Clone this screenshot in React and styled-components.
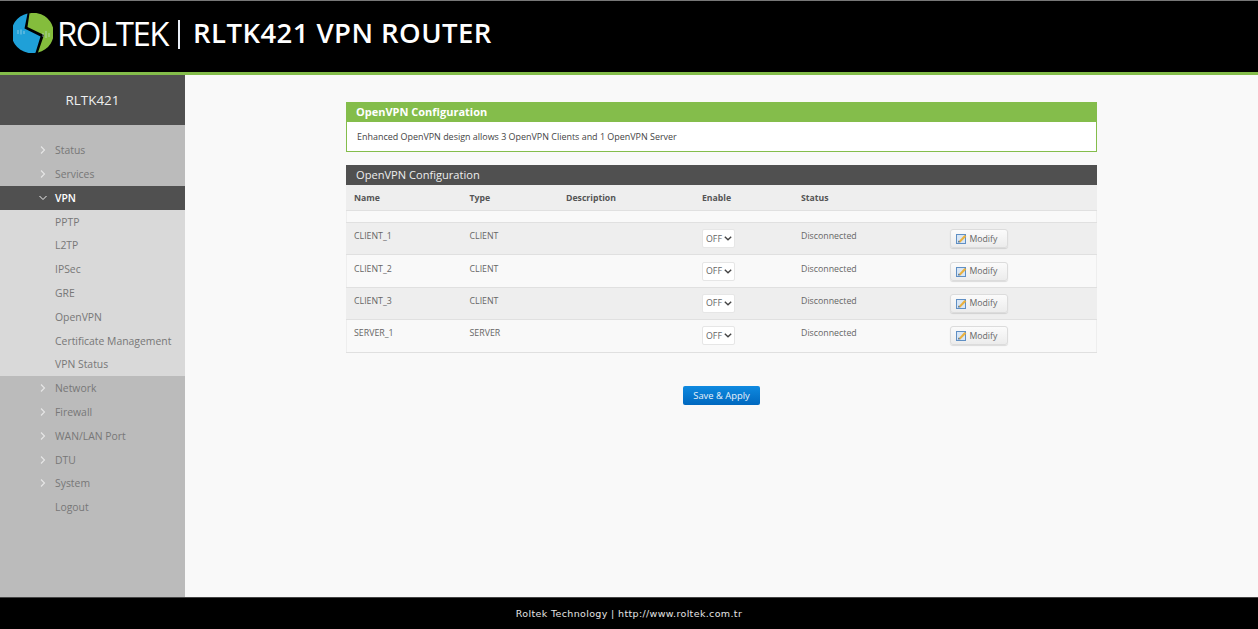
import React from 'react';
import styled, { createGlobalStyle } from 'styled-components';

const Global = createGlobalStyle`
    html, body { margin: 0; padding: 0; height: 100%; }
    body { font-family: "Open Sans", "Noto Sans", sans-serif; background: #000; }
    #root { height: 100%; }
`;

const Page = styled.div`
    height: 629px;
    display: flex;
    flex-direction: column;
    overflow: hidden;
`;

const Header = styled.header`
    height: 64px;
    flex: none;
    background: #000;
    border-top: 1px solid #777;
    border-bottom: 3px solid #84bd4b;
    display: flex;
    align-items: center;
    padding: 0 0 7px 13px;
    color: #fff;
`;

const Logo = styled.svg`
    width: 40px;
    height: 40px;
    flex: none;
`;

const Brand = styled.span`
    font-family: "Open Sans", sans-serif;
    font-size: 33px;
    font-weight: 400;
    letter-spacing: -1.5px;
    margin-left: 4px;
    width: 111px;
    white-space: nowrap;
`;

const Bar = styled.span`
    width: 2px;
    height: 29px;
    background: #e8eef6;
    margin: 3px 13px 0 10px;
    flex: none;
`;

const Title = styled.h1`
    margin: -2px 0 0;
    font-size: 27.5px;
    font-weight: 600;
    letter-spacing: 0.45px;
`;

const Body = styled.div`
    flex: 1;
    display: flex;
    min-height: 0;
`;

const Sidebar = styled.nav`
    width: 185px;
    flex: none;
    background: #bbbbbb;
`;

const SideTitle = styled.div`
    height: 50px;
    background: #505050;
    color: #eee;
    font-size: 13.4px;
    font-weight: 400;
    text-align: center;
    line-height: 50px;
    margin-bottom: 13.3px;
`;

const MenuItem = styled.div`
    height: 23.8px;
    display: flex;
    align-items: center;
    padding-left: 39px;
    font-size: 10.4px;
    color: ${p => (p.$active ? '#fff' : '#777')};
    background: ${p => (p.$active ? '#505050' : 'transparent')};
    font-weight: ${p => (p.$active ? 600 : 400)};
`;

const Chevron = styled.svg`
    width: 8px;
    height: 10px;
    flex: none;
    margin-right: 8px;
`;

const SubMenu = styled.div`
    background: #d9d9d9;
`;

const SubItem = styled.div`
    height: 23.8px;
    display: flex;
    align-items: center;
    padding-left: 55px;
    font-size: 10.4px;
    color: #777;
    white-space: nowrap;
`;

const Main = styled.main`
    flex: 1;
    background: #f9f9f9;
    padding-top: 27px;
`;

const Container = styled.div`
    width: 751px;
    margin: 0 auto;
`;

const InfoBox = styled.section`
    border: 1px solid #84bd4b;
    border-top: none;
    background: #fff;
    margin-bottom: 13px;
`;

const InfoHead = styled.div`
    height: 20px;
    margin: 0 -1px;
    padding-left: 10px;
    background: #84bd4b;
    color: #fff;
    font-size: 11px;
    font-weight: 700;
    line-height: 20px;
`;

const InfoText = styled.div`
    height: 29px;
    padding-left: 10px;
    font-size: 8.95px;
    line-height: 29px;
    color: #444;
`;

const TableHead = styled.div`
    height: 20px;
    padding-left: 10px;
    background: #505050;
    color: #eee;
    font-size: 11.1px;
    line-height: 20px;
`;

const Table = styled.table`
    width: 751px;
    table-layout: fixed;
    border-collapse: collapse;
    border-left: 1px solid #eee;
    border-right: 1px solid #eee;
`;

const Th = styled.th`
    height: 24px;
    padding: 1px 0 0 7px;
    background: #eeeeee;
    border-bottom: 1px solid #e0e0e0;
    color: #555;
    font-size: 8.7px;
    font-weight: 700;
    text-align: left;
    line-height: 1;
`;

const Spacer = styled.tr`
    height: 12px;
    background: #f9f9f9;
`;

const Row = styled.tr`
    height: 32.4px;
    background: ${p => (p.$alt ? '#f9f9f9' : '#eeeeee')};
    border-top: 1px solid #e0e0e0;
    border-bottom: 1px solid #e0e0e0;
`;

const Td = styled.td`
    padding: 0 0 5px 7px;
    color: #666;
    font-size: 8.8px;
`;

const ControlTd = styled.td`
    padding: 0 0 0 7px;
`;

const Select = styled.select`
    display: block;
    width: 33px;
    height: 19px;
    padding: 0 0 0 3px;
    appearance: none;
    background: #fff url("data:image/svg+xml,%3Csvg xmlns='http://www.w3.org/2000/svg' width='8' height='5'%3E%3Cpath d='M0.8 0.8 L4 3.8 L7.2 0.8' fill='none' stroke='%23444' stroke-width='1.400'/%3E%3C/svg%3E") no-repeat right 2px center;
    border: 1px solid #e6e6e6;
    border-radius: 2px;
    color: #666;
    font-family: "Open Sans", sans-serif;
    font-size: 8.8px;
`;

const ModifyBtn = styled.button`
    display: flex;
    align-items: center;
    width: 58px;
    height: 19px;
    padding: 0 0 0 5px;
    border: 1px solid #dcdcdc;
    border-radius: 3px;
    background: linear-gradient(#fbfbfb, #ececec);
    box-shadow: 0 1px 1px rgba(0, 0, 0, 0.12);
    color: #666;
    font-family: "Open Sans", sans-serif;
    font-size: 8.7px;
`;

const PenIcon = styled.svg`
    width: 11px;
    height: 11px;
    margin-right: 3px;
    flex: none;
`;

const Actions = styled.div`
    display: flex;
    justify-content: center;
    margin-top: 33px;
`;

const SaveBtn = styled.button`
    width: 77px;
    height: 19px;
    padding: 0;
    border: none;
    border-radius: 2px;
    background: linear-gradient(#0f8ae0, #0068bf);
    color: #e8f2fb;
    font-family: "Open Sans", sans-serif;
    font-size: 9.4px;
    font-weight: 500;
`;

const Footer = styled.footer`
    height: 31px;
    flex: none;
    background: #000;
    border-top: 1px solid #444;
    color: #e4e4e4;
    font-family: "DejaVu Sans", sans-serif;
    font-size: 9.5px;
    letter-spacing: 0.35px;
    line-height: 31px;
    text-align: center;
`;

const top = ['Status', 'Services'];
const sub = ['PPTP', 'L2TP', 'IPSec', 'GRE', 'OpenVPN', 'Certificate Management', 'VPN Status'];
const bottom = ['Network', 'Firewall', 'WAN/LAN Port', 'DTU', 'System'];
const rows = [
    ['CLIENT_1', 'CLIENT'],
    ['CLIENT_2', 'CLIENT'],
    ['CLIENT_3', 'CLIENT'],
    ['SERVER_1', 'SERVER'],
];

function Arrow({ open }) {
    return (
        <Chevron viewBox="0 0 8 10">
            {open
                ? <path d="M0.5 3 L4 6.5 L7.5 3" fill="none" stroke="#eee" strokeWidth="1" />
                : <path d="M2 1.5 L5.5 5 L2 8.5" fill="none" stroke="#e6e6e6" strokeWidth="1.1" />}
        </Chevron>
    );
}

function Modify() {
    return (
        <ModifyBtn type="button">
            <PenIcon viewBox="0 0 11 11">
                <rect x="0.5" y="1.5" width="9" height="9" fill="#d8e6f5" stroke="#5f8fc4" />
                <path d="M2.500 8.500 L8.500 2 L10.300 3.500 L4.300 9.500 Z" fill="#e9b13f" />
                <path d="M1.800 9.600 L2.500 7.600 L4.300 9.300 Z" fill="#4a6f9c" />
            </PenIcon>
            Modify
        </ModifyBtn>
    );
}

export default function App() {
    return (
        <Page>
            <Global />
            <Header>
                <Logo viewBox="0 0 40 40">
                    <path d="M14.500 0.500 A20 20 0 0 0 22.500 39.800 L27.500 23.500 L11.500 15.500 Z" fill="#1fa0d8" />
                    <path d="M16.500 0.300 A20 20 0 0 1 25 39.400 L31 22 L14.500 14 Z" fill="#84bd3c" />
                    <path d="M5 17 v4 M8 16.500 v5 M11 18 v3 M30 20 v4 M33 18 v7 M36 20 v4" stroke="#cfe8f2" strokeWidth="0.6" />
                </Logo>
                <Brand>ROLTEK</Brand>
                <Bar />
                <Title>RLTK421 VPN ROUTER</Title>
            </Header>
            <Body>
                <Sidebar>
                    <SideTitle>RLTK421</SideTitle>
                    {top.map(t => <MenuItem key={t}><Arrow />{t}</MenuItem>)}
                    <MenuItem $active><Arrow open />VPN</MenuItem>
                    <SubMenu>
                        {sub.map(t => <SubItem key={t}>{t}</SubItem>)}
                    </SubMenu>
                    {bottom.map(t => <MenuItem key={t}><Arrow />{t}</MenuItem>)}
                    <SubItem>Logout</SubItem>
                </Sidebar>
                <Main>
                    <Container>
                        <InfoBox>
                            <InfoHead>OpenVPN Configuration</InfoHead>
                            <InfoText>Enhanced OpenVPN design allows 3 OpenVPN Clients and 1 OpenVPN Server</InfoText>
                        </InfoBox>
                        <TableHead>OpenVPN Configuration</TableHead>
                        <Table>
                            <colgroup>
                                <col style={{ width: 116 }} />
                                <col style={{ width: 96.5 }} />
                                <col style={{ width: 136 }} />
                                <col style={{ width: 99 }} />
                                <col style={{ width: 148.5 }} />
                                <col />
                            </colgroup>
                            <thead>
                                <tr>
                                    <Th>Name</Th>
                                    <Th>Type</Th>
                                    <Th>Description</Th>
                                    <Th>Enable</Th>
                                    <Th>Status</Th>
                                    <Th />
                                </tr>
                            </thead>
                            <tbody>
                                <Spacer><td colSpan="6" /></Spacer>
                                {rows.map((r, i) => (
                                    <Row key={r[0]} $alt={i % 2 === 1}>
                                        <Td>{r[0]}</Td>
                                        <Td>{r[1]}</Td>
                                        <Td />
                                        <ControlTd>
                                            <Select defaultValue="off">
                                                <option value="off">OFF</option>
                                                <option value="on">ON</option>
                                            </Select>
                                        </ControlTd>
                                        <Td>Disconnected</Td>
                                        <ControlTd><Modify /></ControlTd>
                                    </Row>
                                ))}
                            </tbody>
                        </Table>
                        <Actions>
                            <SaveBtn type="button">Save &amp; Apply</SaveBtn>
                        </Actions>
                    </Container>
                </Main>
            </Body>
            <Footer>Roltek Technology | http://www.roltek.com.tr</Footer>
        </Page>
    );
}
